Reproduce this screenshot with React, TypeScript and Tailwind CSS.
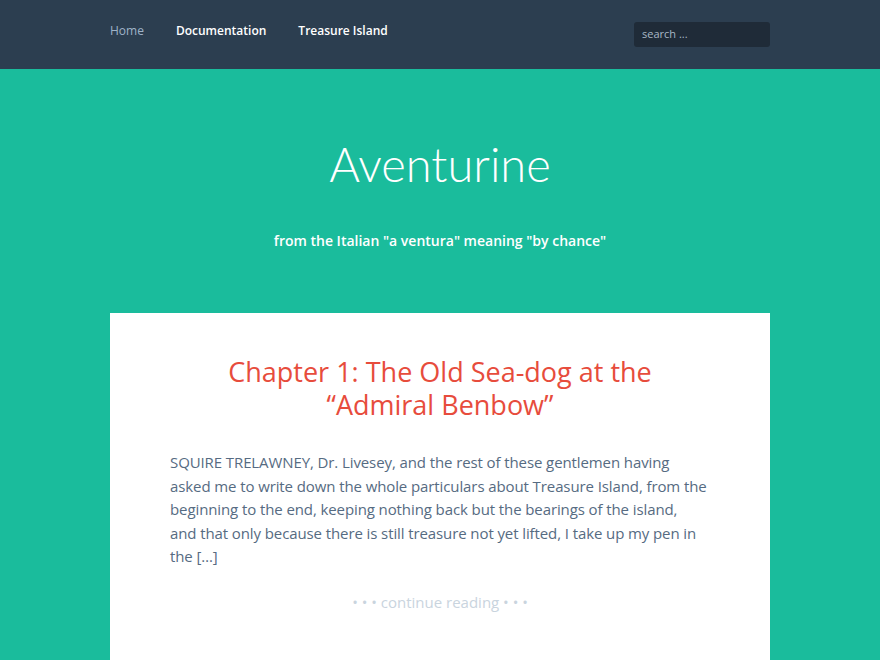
import React from "react";

const navLinks = [
  { label: "Home", active: true },
  { label: "Documentation", active: false },
  { label: "Treasure Island", active: false },
];

const excerpt = [
  "SQUIRE TRELAWNEY, Dr. Livesey, and the rest of these gentlemen having",
  "asked me to write down the whole particulars about Treasure Island, from the",
  "beginning to the end, keeping nothing back but the bearings of the island,",
  "and that only because there is still treasure not yet lifted, I take up my pen in",
  "the […]",
];

export default function App() {
  return (
    <div
      className="min-h-[660px] bg-[#1abc9c]"
      style={{ fontFamily: '"Open Sans", "Noto Sans", sans-serif' }}
    >
      <header className="h-[69px] bg-[#2c3e50]">
        <div className="mx-auto flex h-full w-[660px] items-start justify-between">
          <nav className="flex gap-[32px] pt-[22px]">
            {navLinks.map((l) => (
              <a
                key={l.label}
                href="#"
                className={`text-[12px] leading-[18px] ${
                  l.active ? "text-[#9fb3c8]" : "font-semibold text-white"
                }`}
              >
                {l.label}
              </a>
            ))}
          </nav>
          <div className="mt-[22px] flex h-[25px] w-[136px] items-start rounded-[3px] bg-[#1f2b38] px-[8px] pt-[4px]">
            <input
              type="text"
              placeholder="search ..."
              className="h-[16px] w-full bg-transparent text-[11px] leading-[16px] text-white placeholder:text-[#a9b8c6] focus:outline-none"
            />
          </div>
        </div>
      </header>

      <div className="pt-[71px] text-center text-white">
        <h1
          className="text-[47px] font-light leading-[48px]"
          style={{ fontFamily: 'Lato, "Open Sans", sans-serif' }}
        >
          Aventurine
        </h1>
        <p className="mt-[43px] text-[14px] font-semibold leading-[20px]">
          from the Italian "a ventura" meaning "by chance"
        </p>
      </div>

      <main className="mx-auto mt-[62px] w-[660px] bg-white px-[60px] pb-[70px] pt-[42px]">
        <h2 className="text-center text-[27px] leading-[33px] text-[#e74c3c]">
          <span className="block">Chapter 1: The Old Sea-dog at the</span>
          <span className="block">“Admiral Benbow”</span>
        </h2>
        <p className="mt-[30px] text-[15px] leading-[23.5px] tracking-[-0.1px] text-[#566b82]">
          {excerpt.map((line) => (
            <span key={line} className="block whitespace-nowrap">
              {line}
            </span>
          ))}
        </p>
        <p className="mt-[23px] text-center text-[15px] leading-[20px] text-[#c9d4de]">
          • • • continue reading • • •
        </p>
      </main>
    </div>
  );
}
